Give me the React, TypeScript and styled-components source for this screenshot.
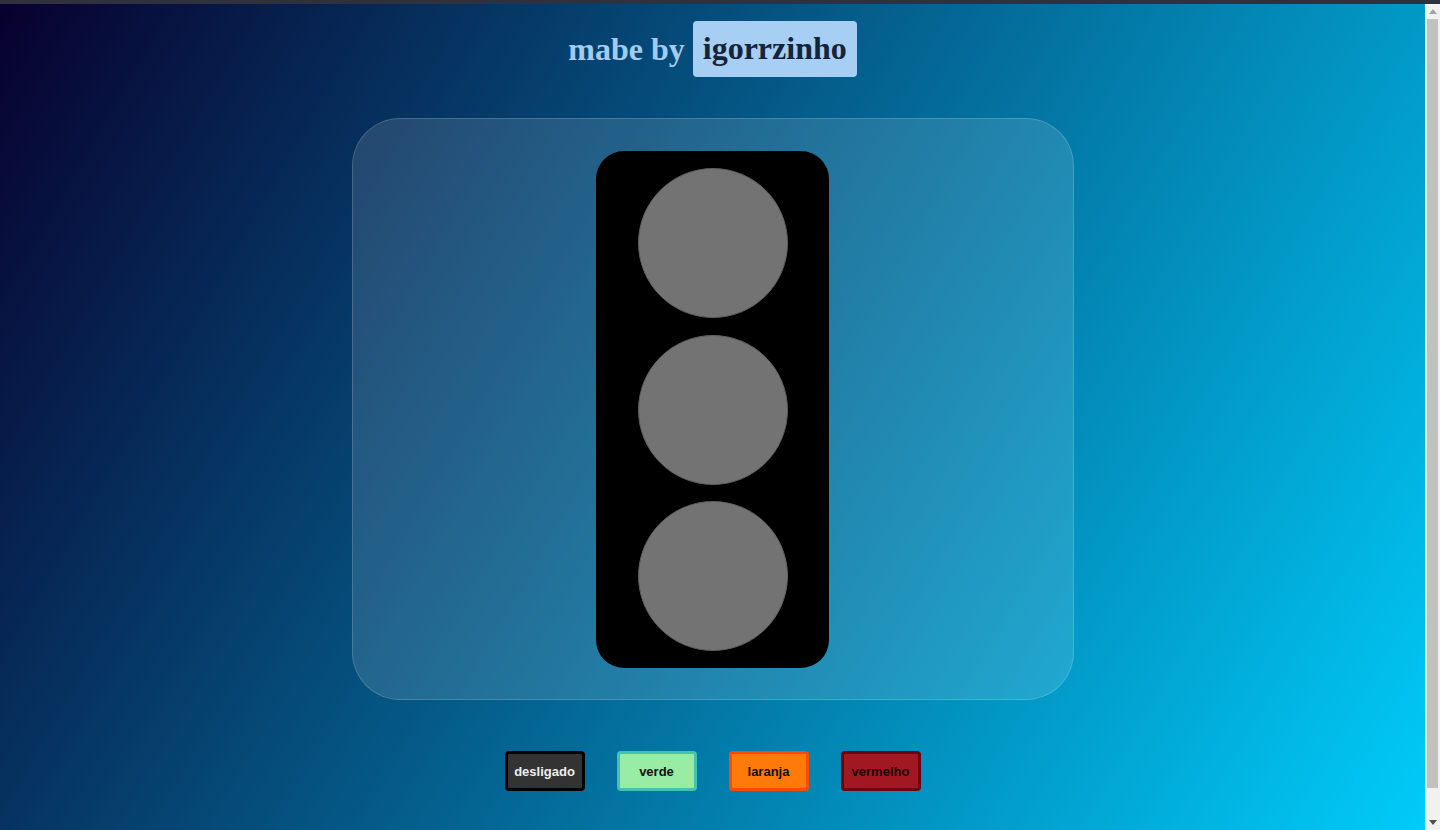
import styled, { createGlobalStyle } from "styled-components";

const GlobalStyle = createGlobalStyle`
  html, body {
    margin: 0;
    padding: 0;
    height: 100%;
    overflow: hidden;
  }
  #root {
    height: 100%;
  }
`;

const Frame = styled.div`
  height: 100vh;
  display: flex;
  flex-direction: column;
`;

const TopStrip = styled.div`
  height: 4px;
  flex: none;
  background: #2f323c;
`;

const Viewport = styled.div`
  flex: 1;
  min-height: 0;
  display: flex;
`;

const Content = styled.div`
  flex: 1;
  overflow: hidden;
`;

// static scrollbar look, the page is a bit taller than the window
const Rail = styled.div`
  width: 15px;
  flex: none;
  background: #f1f1f1;
  display: flex;
  flex-direction: column;
`;

const RailButton = styled.div`
  height: 15px;
  flex: none;
  display: flex;
  align-items: center;
  justify-content: center;
`;

const Track = styled.div`
  flex: 1;
  display: flex;
  flex-direction: column;
  padding: 0 2px 27px;
`;

const Thumb = styled.div`
  flex: 1;
  background: #c1c1c1;
`;

const Page = styled.main`
  min-height: 851px;
  box-sizing: border-box;
  padding: 17px 0 64px;
  background: linear-gradient(120deg, #08002e 0%, #00cdfb 100%);
  display: flex;
  flex-direction: column;
  align-items: center;
`;

const Title = styled.h1`
  margin: 0;
  font-family: "Liberation Serif", "Times New Roman", serif;
  font-size: 32px;
  font-weight: bold;
  color: #a3cbf0;
  display: flex;
  align-items: center;
  gap: 8px;
`;

const Author = styled.span`
  background: #a7cff3;
  color: #15243b;
  padding: 9px 10px 10px;
  border-radius: 4px;
`;

const Card = styled.section`
  margin-top: 41px;
  width: 722px;
  height: 582px;
  box-sizing: border-box;
  padding: 32px 0;
  border-radius: 48px;
  border: 1px solid rgba(255, 255, 255, 0.16);
  background: rgba(255, 255, 255, 0.12);
  display: flex;
  justify-content: center;
`;

const Light = styled.div`
  width: 233px;
  height: 517px;
  box-sizing: border-box;
  padding: 17px 0;
  background: #000;
  border-radius: 28px;
  display: flex;
  flex-direction: column;
  align-items: center;
  justify-content: space-between;
`;

const Lamp = styled.div<{ $on?: string }>`
  width: 150px;
  height: 150px;
  border-radius: 50%;
  box-sizing: border-box;
  border: 1px solid #5e5e5e;
  background: ${(p) => p.$on ?? "#737373"};
`;

const Controls = styled.div`
  margin-top: 51px;
  display: flex;
  gap: 32px;
`;

const Button = styled.button<{ $bg: string; $border: string; $fg: string }>`
  width: 80px;
  height: 40px;
  box-sizing: border-box;
  border: 3px solid ${(p) => p.$border};
  border-radius: 4px;
  background: ${(p) => p.$bg};
  color: ${(p) => p.$fg};
  font-family: "Liberation Sans", Arial, sans-serif;
  font-size: 13px;
  font-weight: bold;
  padding: 0;
  cursor: pointer;
`;

const buttons = [
  { label: "desligado", bg: "#333333", border: "#000000", fg: "#eeeeee" },
  { label: "verde", bg: "#98eca4", border: "#45c3b2", fg: "#111111" },
  { label: "laranja", bg: "#ff7a08", border: "#ff4a00", fg: "#111111" },
  { label: "vermelho", bg: "#a21822", border: "#6e0010", fg: "#1a0004" },
];

const Arrow = ({ up }: { up?: boolean }) => (
  <svg width="8" height="5" viewBox="0 0 8 5">
    {up ? (
      <polygon points="0,5 8,5 4,0" fill="#a3a3a3" />
    ) : (
      <polygon points="0,0 8,0 4,5" fill="#505050" />
    )}
  </svg>
);

export default function App() {
  return (
    <Frame>
      <GlobalStyle />
      <TopStrip />
      <Viewport>
        <Content>
          <Page>
            <Title>
              mabe by <Author>igorrzinho</Author>
            </Title>
            <Card>
              <Light>
                <Lamp />
                <Lamp />
                <Lamp />
              </Light>
            </Card>
            <Controls>
              {buttons.map((b) => (
                <Button key={b.label} $bg={b.bg} $border={b.border} $fg={b.fg}>
                  {b.label}
                </Button>
              ))}
            </Controls>
          </Page>
        </Content>
        <Rail>
          <RailButton>
            <Arrow up />
          </RailButton>
          <Track>
            <Thumb />
          </Track>
          <RailButton>
            <Arrow />
          </RailButton>
        </Rail>
      </Viewport>
    </Frame>
  );
}
